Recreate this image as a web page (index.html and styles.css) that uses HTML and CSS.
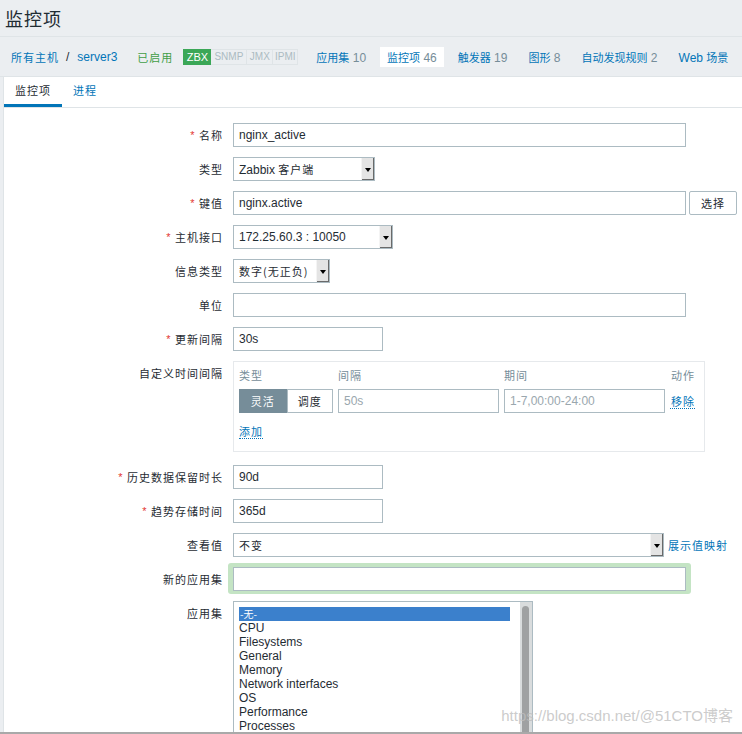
FILE: index.html
```html
<!DOCTYPE html>
<html lang="zh">
<head>
<meta charset="utf-8">
<title>监控项</title>
<link rel="stylesheet" href="styles.css">
</head>
<body>
<header class="title-bar"><h1>监控项</h1></header>
<nav class="host-nav">
  <div class="crumbs"><a class="lnk cjk">所有主机</a><span class="sep">/</span><a class="lnk">server3</a></div>
  <span class="enabled cjk">已启用</span>
  <div class="tags"><span class="tag on t-zbx">ZBX</span><span class="tag t-snmp">SNMP</span><span class="tag t-jmx">JMX</span><span class="tag t-ipmi">IPMI</span></div>
  <div class="nav-items">
    <a class="nav-item"><span class="ncjk">应用集</span> <span class="cnt">10</span></a>
    <a class="nav-item active"><span class="ncjk">监控项</span> <span class="cnt">46</span></a>
    <a class="nav-item"><span class="ncjk">触发器</span> <span class="cnt">19</span></a>
    <a class="nav-item"><span class="ncjk">图形</span> <span class="cnt">8</span></a>
    <a class="nav-item"><span class="ncjk">自动发现规则</span> <span class="cnt">2</span></a>
    <a class="nav-item">Web <span class="ncjk">场景</span></a>
  </div>
</nav>
<main class="content">
  <div class="tabs">
    <span class="tab active cjk">监控项</span>
    <span class="tab cjk">进程</span>
  </div>
  <form class="form">
    <label class="lbl"><span class="req">*</span> 名称</label>
    <div class="ctl"><input class="inp w-wide" value="nginx_active"></div>

    <label class="lbl">类型</label>
    <div class="ctl"><div class="sel w-type"><span class="sel-text">Zabbix <span class="cjk">客户端</span></span><span class="arrow"></span></div></div>

    <label class="lbl"><span class="req">*</span> 键值</label>
    <div class="ctl"><input class="inp w-wide" value="nginx.active"><button type="button" class="btn cjk">选择</button></div>

    <label class="lbl"><span class="req">*</span> 主机接口</label>
    <div class="ctl"><div class="sel w-host"><span class="sel-text">172.25.60.3 : 10050</span><span class="arrow"></span></div></div>

    <label class="lbl">信息类型</label>
    <div class="ctl"><div class="sel w-info"><span class="sel-text cjk">数字(无正负)</span><span class="arrow"></span></div></div>

    <label class="lbl">单位</label>
    <div class="ctl"><input class="inp w-wide" value=""></div>

    <label class="lbl"><span class="req">*</span> 更新间隔</label>
    <div class="ctl"><input class="inp w-small" value="30s"></div>

    <label class="lbl">自定义时间间隔</label>
    <div class="ctl">
      <div class="intervals">
        <div class="iv-grid">
          <span class="iv-head cjk">类型</span>
          <span class="iv-head cjk">间隔</span>
          <span class="iv-head cjk">期间</span>
          <span class="iv-head cjk act">动作</span>
          <div class="seg"><span class="seg-btn on cjk">灵活</span><span class="seg-btn cjk">调度</span></div>
          <input class="inp ph" value="50s">
          <input class="inp ph" value="1-7,00:00-24:00">
          <a class="dlink cjk act">移除</a>
        </div>
        <a class="dlink add cjk">添加</a>
      </div>
    </div>

    <label class="lbl"><span class="req">*</span> 历史数据保留时长</label>
    <div class="ctl"><input class="inp w-small" value="90d"></div>

    <label class="lbl"><span class="req">*</span> 趋势存储时间</label>
    <div class="ctl"><input class="inp w-small" value="365d"></div>

    <label class="lbl">查看值</label>
    <div class="ctl"><div class="sel w-view"><span class="sel-text cjk">不变</span><span class="arrow"></span></div><a class="lnk map cjk">展示值映射</a></div>

    <label class="lbl">新的应用集</label>
    <div class="ctl"><div class="glow"><input class="inp w-wide" value=""></div></div>

    <label class="lbl">应用集</label>
    <div class="ctl">
      <div class="listbox">
        <ul class="options">
          <li class="selected cjk">-无-</li>
          <li>CPU</li>
          <li>Filesystems</li>
          <li>General</li>
          <li>Memory</li>
          <li>Network interfaces</li>
          <li>OS</li>
          <li>Performance</li>
          <li>Processes</li>
        </ul>
        <div class="scroll"><div class="thumb"></div></div>
      </div>
    </div>
  </form>
</main>
<div class="watermark">https://blog.csdn.net/@51CTO博客</div>
<div class="frame-bottom"></div>
</body>
</html>
```

FILE: styles.css
```css
* { box-sizing: border-box; }
html, body { margin: 0; padding: 0; }
body {
  width: 742px;
  height: 734px;
  overflow: hidden;
  position: relative;
  background: #ebeef1;
  font-family: "Liberation Sans", "Noto Sans CJK SC", sans-serif;
  font-size: 12px;
  color: #1f2c33;
}
.cjk { font-family: "Noto Sans CJK SC", sans-serif; font-size: 11px; letter-spacing: 1px; }
.ncjk { font-family: "Noto Sans CJK SC", sans-serif; font-size: 11px; letter-spacing: 0; }

.title-bar {
  height: 37px;
  border-bottom: 1px solid #dfe4e7;
  padding-left: 5px;
  display: flex;
  align-items: center;
}
.title-bar h1 {
  margin: 0;
  font-family: "Noto Sans CJK SC", sans-serif;
  font-weight: normal;
  font-size: 18px;
  letter-spacing: 1px;
  line-height: 24px;
  color: #1f2c33;
}

.host-nav {
  height: 40px;
  display: flex;
  align-items: center;
  padding-left: 11px;
  border-bottom: 1px solid #dfe4e7;
  white-space: nowrap;
}
.host-nav > * { flex-shrink: 0; }
.lnk { color: #0275b8; text-decoration: none; white-space: nowrap; }
.crumbs { display: flex; align-items: center; }
.sep { margin: 0 8px 0 7px; color: #1f2c33; }
.enabled { color: #429e47; margin-left: 20px; }
.tags { display: flex; margin-left: 10px; height: 16px; }
.tag {
  flex-shrink: 0;
  height: 16px;
  line-height: 14px;
  font-size: 10px;
  text-align: center;
  border: 1px solid #dfe4e7;
  border-left: none;
  color: #acbbc2;
  background: #ebeef1;
}
.tag.on { background: #3ba757; border-color: #3ba757; color: #fff; font-size: 11px; }
.t-zbx { width: 28px; border-left: 1px solid #3ba757; }
.t-snmp { width: 36px; }
.t-jmx { width: 26px; }
.t-ipmi { width: 25px; }
.nav-items { display: flex; align-items: center; margin-left: 11px; gap: 7px; }
.nav-item {
  flex-shrink: 0;
  color: #0275b8;
  text-decoration: none;
  padding: 0 7px;
  height: 20px;
  line-height: 20px;
  white-space: nowrap;
}
.nav-item .cnt { color: #768d99; }
.nav-item.active { background: #fff; }

.content {
  margin-left: 3px;
  border-left: 1px solid #dfe4e7;
  background: #fff;
  height: 700px;
}
.tabs {
  display: flex;
  height: 31px;
  border-bottom: 1px solid #dfe4e7;
}
.tab {
  padding: 0 11px;
  line-height: 27px;
  border-bottom: 3px solid transparent;
  color: #0275b8;
}
.tab.active { color: #1f2c33; border-bottom-color: #0275b8; }

.form {
  display: grid;
  grid-template-columns: 219px 1fr;
  column-gap: 10px;
  row-gap: 10px;
  padding-top: 15px;
}
.lbl {
  height: 24px;
  display: flex;
  align-items: center;
  justify-content: flex-end;
  white-space: pre;
  font-family: "Noto Sans CJK SC", sans-serif;
  font-size: 11px;
  letter-spacing: 1px;
  color: #1f2c33;
}
.req { color: #e33734; font-family: "Liberation Sans", sans-serif; font-size: 11px; line-height: 1; }
.ctl { display: flex; align-items: center; }

.inp {
  height: 24px;
  border: 1px solid #acbbc2;
  padding: 0 5px;
  font-family: "Liberation Sans", sans-serif;
  font-size: 12px;
  color: #1f2c33;
  background: #fff;
  outline: none;
}
.w-wide { width: 453px; }
.w-small { width: 150px; }
.inp.ph { color: #9aa7ae; width: 161px; }

.btn {
  margin-left: 3px;
  width: 48px;
  height: 24px;
  border: 1px solid #acbbc2;
  border-radius: 2px;
  background: #fff;
  color: #1f2c33;
  padding: 0;
}

.sel {
  height: 24px;
  border: 1px solid #acbbc2;
  display: flex;
  align-items: stretch;
  background: #fff;
}
.sel-text { flex: 1; padding-left: 5px; line-height: 22px; white-space: nowrap; overflow: hidden; }
.arrow {
  width: 13px;
  background: #e4e4e4;
  border-left: 1px solid #f4f4f4;
  box-shadow: inset -1px -1px 0 #6a6a6a;
  display: flex;
  align-items: center;
  justify-content: center;
}
.arrow::after {
  content: "";
  border-left: 3px solid transparent;
  border-right: 3px solid transparent;
  border-top: 4px solid #000;
  margin: 1px 1px 0 0;
}
.w-type { width: 142px; }
.w-host { width: 160px; }
.w-info { width: 97px; }
.w-view { width: 431px; }
.map { margin-left: 4px; }

.intervals {
  width: 472px;
  height: 91px;
  border: 1px solid #e6e9ec;
  padding: 5px 5px 0 5px;
  margin-bottom: 3px;
}
.iv-grid {
  display: grid;
  grid-template-columns: 94px 161px 161px auto;
  column-gap: 5px;
  row-gap: 6px;
  align-items: center;
}
.iv-head { color: #768d99; line-height: 16px; }
.act { padding-left: 1px; }
.seg { display: flex; height: 24px; }
.seg-btn {
  width: 47px;
  line-height: 22px;
  text-align: center;
  border: 1px solid #acbbc2;
  color: #1f2c33;
  background: #fff;
}
.seg-btn.on { width: 48px; background: #768d99; border-color: #768d99; color: #fff; }
.dlink {
  color: #0275b8;
  text-decoration: none;
  border-bottom: 1px dotted #0275b8;
  line-height: 14px;
  justify-self: start;
}
.add { display: inline-block; margin-top: 11px; }

.glow {
  padding: 4px 5px 3px 5px;
  margin: -4px -5px -3px -5px;
  background: #c4e4c4;
  border-radius: 3px;
  display: flex;
}

.listbox {
  width: 300px;
  height: 150px;
  border: 1px solid #acbbc2;
  display: flex;
  align-self: flex-start;
}
.options {
  flex: 1;
  list-style: none;
  margin: 0;
  padding: 5px 5px 0 5px;
}
.options li {
  height: 14px;
  line-height: 14px;
  font-size: 12px;
  color: #1f2c33;
  white-space: nowrap;
}
.options li.selected {
  background: #3b80cc;
  color: #fff;
  font-size: 10px;
  letter-spacing: 0;
  padding-left: 1px;
}
.scroll {
  width: 12px;
  margin-left: 5px;
  background: #d9dcdd;
  padding: 4px 3px 0 2px;
}
.thumb {
  height: 200px;
  border-radius: 4px;
  background: #9fa1a2;
}

.watermark {
  position: absolute;
  right: 9px;
  bottom: 9px;
  font-family: "Liberation Sans", "Noto Sans CJK SC", sans-serif;
  font-size: 15px;
  color: rgba(190, 190, 190, 0.8);
  white-space: nowrap;
}
.frame-bottom {
  position: absolute;
  left: 0;
  right: 0;
  bottom: 0;
  height: 2px;
  background: #a9a9a9;
}
```
